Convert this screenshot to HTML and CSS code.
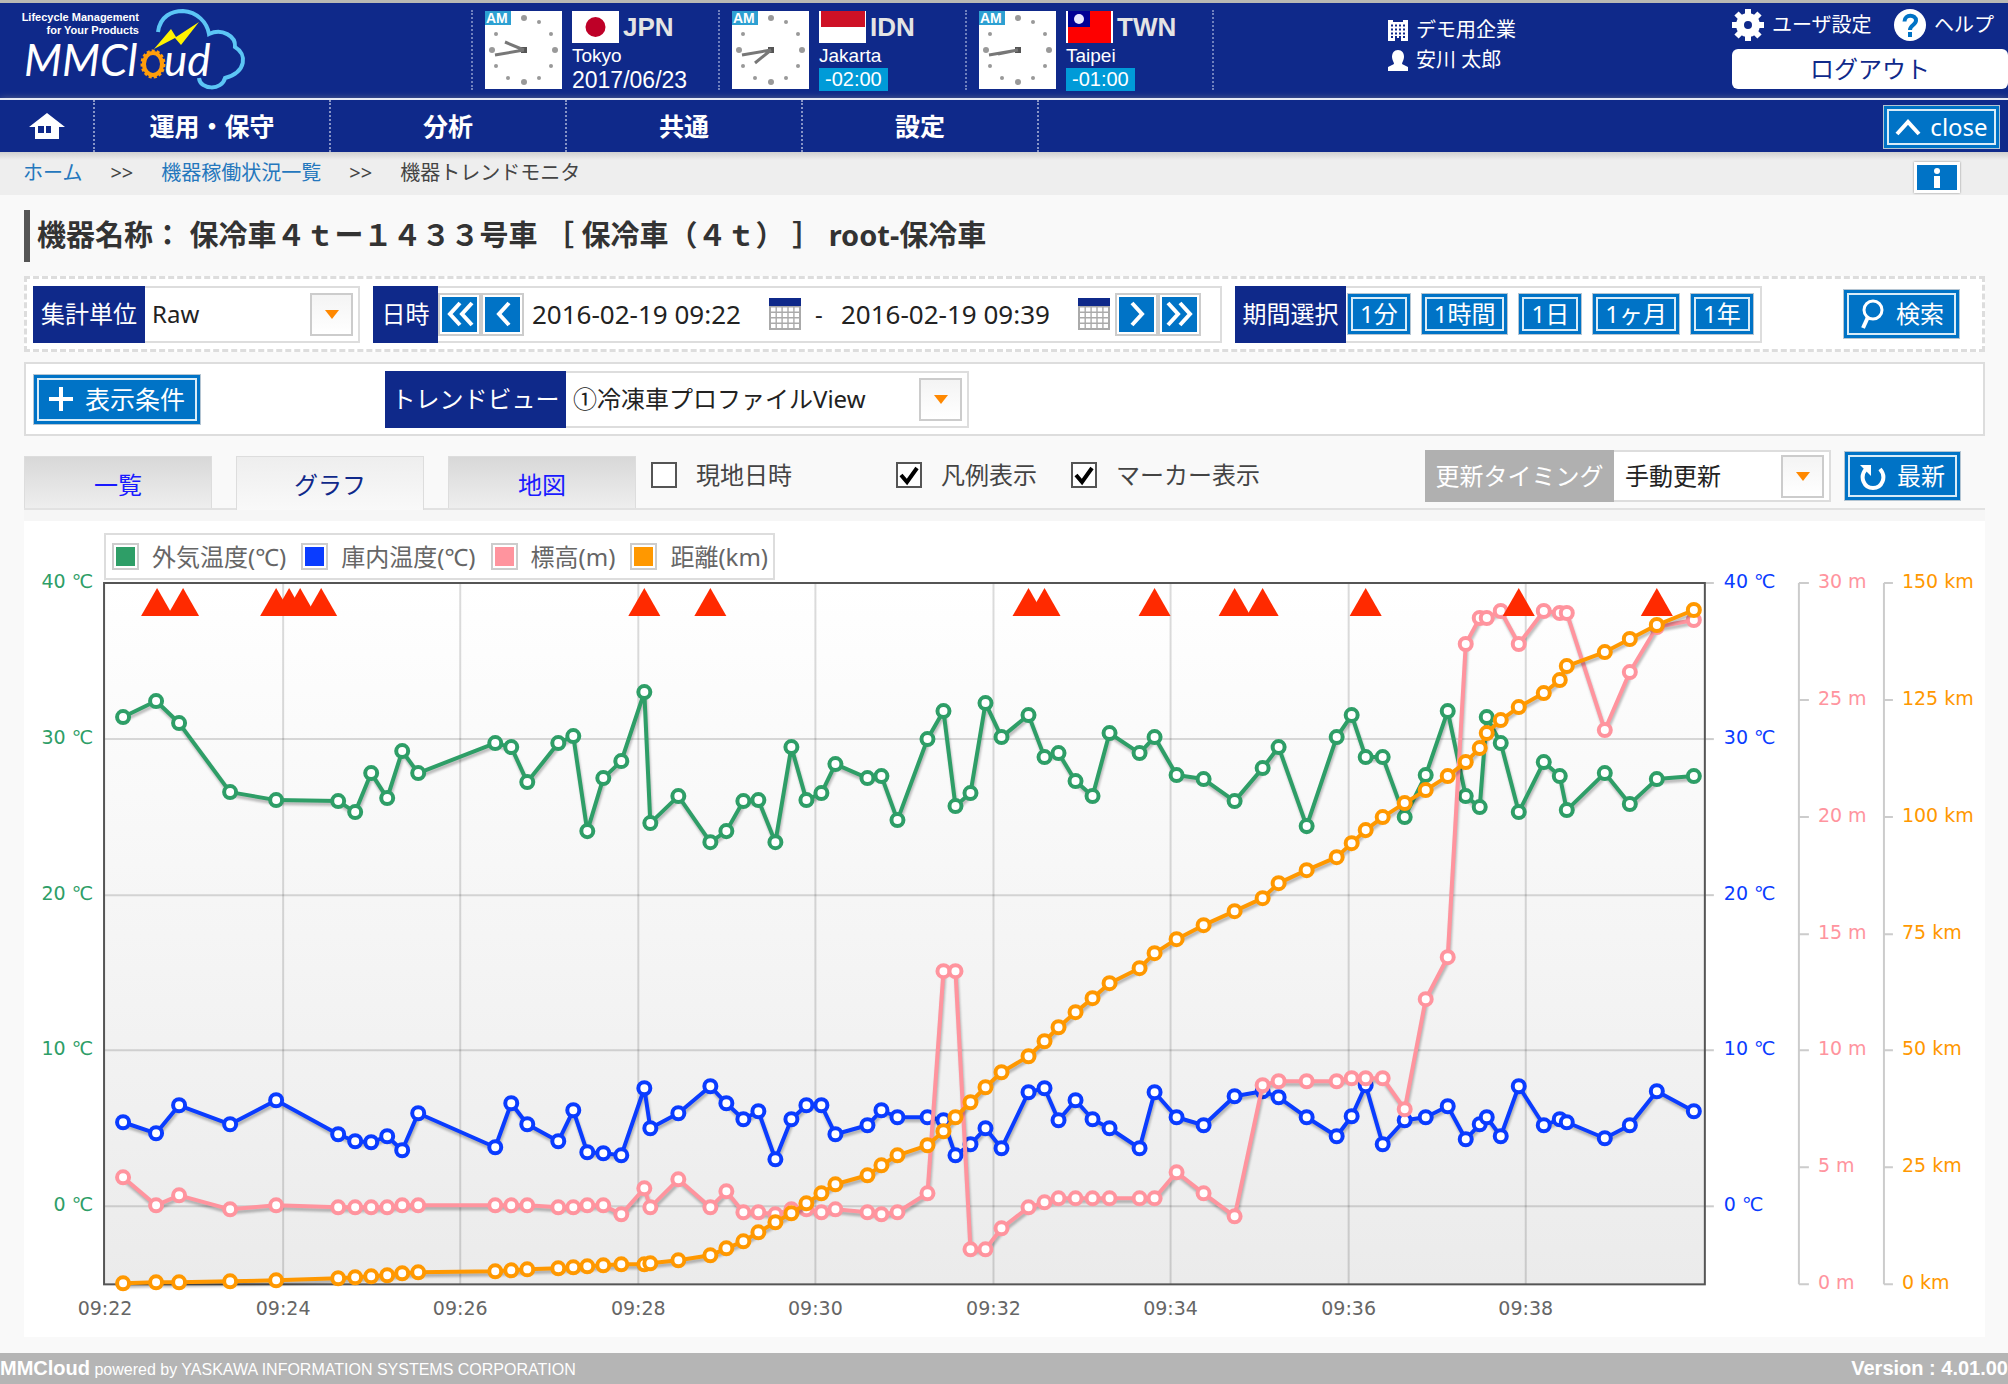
FILE: index.html
```html
<!DOCTYPE html>
<html lang="ja">
<head>
<meta charset="utf-8">
<title>MMCloud - 機器トレンドモニタ</title>
<link rel="stylesheet" href="styles.css">
</head>
<body>
<svg class="defs" width="0" height="0" aria-hidden="true">
  <symbol id="dial" viewBox="0 0 77 78">
    <g fill="#999"><circle cx="39" cy="7" r="3"/><circle cx="54" cy="11" r="2"/><circle cx="66" cy="23" r="2"/><circle cx="70" cy="39" r="3"/><circle cx="66" cy="55" r="2"/><circle cx="54" cy="67" r="2"/><circle cx="39" cy="71" r="3"/><circle cx="23" cy="67" r="2"/><circle cx="11" cy="55" r="2"/><circle cx="7" cy="39" r="3"/><circle cx="11" cy="23" r="2"/></g>
    <rect width="26" height="14" fill="#2da0d2"/>
    <rect x="36" y="36" width="6" height="6" fill="#555"/>
  </symbol>
  <symbol id="calendar" viewBox="0 0 32 32">
    <rect width="32" height="32" fill="#aaa"/><rect width="32" height="8" fill="#0f298a"/>
    <path d="M2 11.500h28M2 17h28M2 22.500h28M2 28h28" stroke="#fff" stroke-width="4" stroke-dasharray="4.500 1.400"/>
  </symbol>
</svg>

<header class="header">
  <a class="logo" href="#" aria-label="MMCloud">
    <svg width="250" height="88" viewBox="0 0 250 88">
      <g fill="#fff"><text class="tagline" x="139" y="17" text-anchor="end">Lifecycle Management</text><text class="tagline" x="139" y="30" text-anchor="end">for Your Products</text>
      <text class="wordmark" x="24" y="72">MMCl</text><text class="wordmark" x="164" y="72">ud</text></g>
      <ellipse cx="153" cy="60" rx="9" ry="11" fill="none" stroke="#ff9d0a" stroke-width="4"/>
      <ellipse cx="153" cy="60" rx="11" ry="13" fill="none" stroke="#ff9d0a" stroke-width="3" stroke-dasharray="3 2"/>
      <path d="M158 28C160 12 172 7 183 7C197 8 207 18 209 30C222 24 236 32 235 43C247 50 247 68 225 74C222 87 200 86 199 74" fill="none" stroke="#5cc5f5" stroke-width="4"/>
      <path d="M154 45L171 25L176 33L199 18L181 41L175 34Z" fill="#fff200"/>
    </svg>
  </a>
  <section class="clock">
    <svg class="face" viewBox="0 0 77 78"><use href="#dial"/><text class="am" x="1" y="12">AM</text><path d="M39 39L20 31M39 39L10 44" stroke="#777" stroke-width="3"/></svg>
    <div class="zone"><div class="country"><svg class="flag" viewBox="0 0 47 32"><rect width="47" height="32" fill="#fff"/><circle cx="23.500" cy="16" r="10" fill="#be0027"/></svg><b>JPN</b></div><span class="city">Tokyo</span><span class="date">2017/06/23</span></div>
  </section>
  <section class="clock">
    <svg class="face" viewBox="0 0 77 78"><use href="#dial"/><text class="am" x="1" y="12">AM</text><path d="M39 39L23 52M39 39L10 44" stroke="#777" stroke-width="3"/></svg>
    <div class="zone"><div class="country"><svg class="flag" viewBox="0 0 47 32"><rect width="47" height="32" fill="#fff"/><rect x="2" width="44" height="16" fill="#ce1126"/></svg><b>IDN</b></div><span class="city">Jakarta</span><span class="offset">-02:00</span></div>
  </section>
  <section class="clock last">
    <svg class="face" viewBox="0 0 77 78"><use href="#dial"/><text class="am" x="1" y="12">AM</text><path d="M39 39L19 43M39 39L10 44" stroke="#777" stroke-width="3"/></svg>
    <div class="zone"><div class="country"><svg class="flag" viewBox="0 0 47 32"><rect width="47" height="32" fill="#fff"/><rect x="2" width="43" height="32" fill="#fe0000"/><rect x="2" width="22" height="16" fill="#000095"/><circle cx="13" cy="8" r="5" fill="#e8e8ff"/></svg><b>TWN</b></div><span class="city">Taipei</span><span class="offset">-01:00</span></div>
  </section>
  <div class="account">
    <p><svg width="20" height="21" viewBox="0 0 20 21"><path d="M0 0h5v2h10V0h5v21h-7v-3H7v3H0z" fill="#fff"/><path d="M3 5.500h14M3 9.500h14M3 13.500h14M3 17h14" stroke="#0f298a" stroke-width="2" stroke-dasharray="2 2"/></svg>デモ用企業</p>
    <p><svg width="20" height="21" viewBox="0 0 20 21"><path d="M10 0c4 0 6 3 6 7 0 3-2 5-2 7l6 3v4H0v-4l6-3c0-2-2-4-2-7 0-4 2-7 6-7z" fill="#fff"/></svg>安川 太郎</p>
  </div>
  <div class="session">
    <div class="links">
      <a href="#"><svg width="32" height="32" viewBox="0 0 32 32"><circle cx="16" cy="16" r="8" fill="none" stroke="#fff" stroke-width="8"/><path d="M16 0v6M16 26v6M0 16h6M26 16h6M4.500 4.500l5 5M22.500 22.500l5 5M4.500 27.500l5-5M22.500 9.500l5-5" stroke="#fff" stroke-width="6"/></svg>ユーザ設定</a>
      <a href="#"><svg width="32" height="32" viewBox="0 0 32 32"><circle cx="16" cy="16" r="16" fill="#fff"/><path d="M10.500 12.500c0-7.500 11.500-7.500 11.500-1 0 4.500-6 4.500-6 9.500" fill="none" stroke="#0073c6" stroke-width="4"/><rect x="14" y="23" width="4" height="5" fill="#0073c6"/></svg>ヘルプ</a>
    </div>
    <button class="logout" type="button">ログアウト</button>
  </div>
</header>

<nav class="nav">
  <a class="home" href="#" aria-label="ホーム"><svg width="36" height="26" viewBox="0 0 36 26"><path d="M18 0L36 14h-6v12H6V14H0z" fill="#fff"/><path d="M9 13h6v7H9zM17 13h5v7h-5z" fill="#0f298a"/></svg></a>
  <a href="#">運用・保守</a><a href="#">分析</a><a href="#">共通</a><a href="#">設定</a>
  <button class="btn close" type="button"><svg width="26" height="18" viewBox="0 0 26 18"><path d="M2 16L13 4L24 16" fill="none" stroke="#fff" stroke-width="4"/></svg>close</button>
</nav>

<div class="crumbs">
  <a href="#">ホーム</a><span>&gt;&gt;</span><a href="#">機器稼働状況一覧</a><span>&gt;&gt;</span><span class="here">機器トレンドモニタ</span>
  <button class="info" type="button" aria-label="情報"><svg width="8" height="20" viewBox="0 0 8 20"><circle cx="4" cy="3" r="3" fill="#fff"/><rect x="1" y="8" width="6" height="12" fill="#fff"/></svg></button>
</div>

<main class="main">
  <h1 class="title">機器名称： 保冷車４ｔー１４３３号車 ［ 保冷車（４ｔ） ］ root-保冷車</h1>

  <form class="filters">
    <div class="field unit"><label class="cap" for="unit">集計単位</label><select id="unit"><option>Raw</option></select><i class="drop"></i></div>
    <div class="field period">
      <label class="cap" for="from">日時</label>
      <button class="step" type="button" aria-label="大きく戻る"><svg width="28" height="26" viewBox="0 0 28 26"><path d="M14 2L4 13L14 24M26 2L16 13L26 24" fill="none" stroke="#fff" stroke-width="4"/></svg></button>
      <button class="step" type="button" aria-label="戻る"><svg width="28" height="26" viewBox="0 0 28 26"><path d="M20 2L10 13L20 24" fill="none" stroke="#fff" stroke-width="4"/></svg></button>
      <input id="from" class="when" type="text" value="2016-02-19 09:22">
      <svg class="cal"><use href="#calendar"/></svg>
      <span class="dash">-</span>
      <input class="when" type="text" value="2016-02-19 09:39" aria-label="終了日時">
      <svg class="cal"><use href="#calendar"/></svg>
      <button class="step" type="button" aria-label="進む"><svg width="28" height="26" viewBox="0 0 28 26"><path d="M9 2L19 13L9 24" fill="none" stroke="#fff" stroke-width="4"/></svg></button>
      <button class="step" type="button" aria-label="大きく進む"><svg width="28" height="26" viewBox="0 0 28 26"><path d="M2 2L12 13L2 24M14 2L24 13L14 24" fill="none" stroke="#fff" stroke-width="4"/></svg></button>
    </div>
    <div class="field ranges"><span class="cap">期間選択</span>
      <button class="btn range" type="button">1分</button><button class="btn range" type="button">1時間</button><button class="btn range" type="button">1日</button><button class="btn range" type="button">1ヶ月</button><button class="btn range" type="button">1年</button>
    </div>
    <button class="btn action" type="button"><svg width="26" height="30" viewBox="0 0 26 30"><circle cx="14" cy="11" r="9" fill="none" stroke="#fff" stroke-width="3"/><path d="M9 18L4 29" stroke="#fff" stroke-width="4"/></svg>検索</button>
  </form>

  <div class="views">
    <button class="btn condition" type="button"><svg width="24" height="24" viewBox="0 0 24 24"><path d="M12 0v24M0 12h24" stroke="#fff" stroke-width="4"/></svg>表示条件</button>
    <div class="field view"><label class="cap" for="view">トレンドビュー</label><select id="view"><option>①冷凍車プロファイルView</option></select><i class="drop"></i></div>
  </div>

  <div class="toolbar">
    <div class="tabs"><a href="#">一覧</a><a class="active" href="#">グラフ</a><a href="#">地図</a></div>
    <div class="checks">
      <label class="local"><input type="checkbox">現地日時</label>
      <label><input type="checkbox" checked>凡例表示</label>
      <label><input type="checkbox" checked>マーカー表示</label>
    </div>
    <div class="field timing"><label class="cap" for="timing">更新タイミング</label><select id="timing"><option>手動更新</option></select><i class="drop"></i></div>
    <button class="btn action" type="button"><svg width="26" height="30" viewBox="0 0 26 30"><path d="M6 8C-1 16 4 27 13 27S27 16 20 8" fill="none" stroke="#fff" stroke-width="4"/><path d="M0 4h11v11z" fill="#fff"/></svg>最新</button>
  </div>

  <section class="panel">
    <ul class="legend">
      <li><i class="sw green"></i>外気温度(℃)</li><li><i class="sw blue"></i>庫内温度(℃)</li><li><i class="sw pink"></i>標高(m)</li><li><i class="sw orange"></i>距離(km)</li>
    </ul>
    <svg id="chart" class="chart" viewBox="24 581 1960 757" role="img" aria-label="トレンドグラフ"></svg>
  </section>
</main>

<footer class="footer"><span><b>MMCloud</b> powered by YASKAWA INFORMATION SYSTEMS CORPORATION</span><b>Version : 4.01.00</b></footer>
<script src="chart.js"></script>
</body>
</html>
```
FILE: styles.css
```css
* { box-sizing: border-box; }
body {
  margin: 0;
  min-height: 100vh;
  display: flex;
  flex-direction: column;
  background: #f9f9f9;
  color: #444;
  font: 24px/32px "Noto Sans", "Noto Sans CJK JP", sans-serif;
}
a { text-decoration: none; color: inherit; }
button, input, select { font: inherit; color: inherit; margin: 0; }
button { cursor: pointer; padding: 0; }
p, ul, h1 { margin: 0; padding: 0; }
.defs { position: absolute; }

.header {
  display: flex;
  height: 98px;
  padding-top: 5px;
  border-top: 3px solid #b9b9b4;
  background: #0f298a;
  color: #fff;
  font-size: 20px;
}
.logo { width: 471px; }
.logo svg { display: block; margin-top: -4px; }
.tagline { font: bold 11px "Liberation Sans", sans-serif; }
.wordmark { font: italic 44px Lato, sans-serif; }
.clock {
  display: flex;
  gap: 10px;
  width: 247px;
  height: 80px;
  margin-top: 2px;
  padding: 1px 0 0 12px;
  border-left: 2px dotted #6f80bd;
  font-family: "Liberation Sans", Arial, sans-serif;
}
.clock.last { width: 249px; border-right: 2px dotted #6f80bd; }
.face { width: 77px; height: 78px; background: #fff; }
.am { font: bold 14px "Liberation Sans", sans-serif; fill: #fff; }
.zone { display: flex; flex-direction: column; align-items: flex-start; }
.country { display: flex; align-items: center; gap: 4px; height: 32px; font-size: 26px; color: #e4e4e4; }
.flag { width: 47px; height: 32px; }
.city { font-size: 19px; line-height: 25px; }
.date { font-size: 23px; line-height: 24px; }
.offset { padding: 0 6px; background: #009bd8; line-height: 23px; }
.account { margin: 7px auto 0 174px; }
.account p { display: flex; align-items: center; gap: 8px; height: 30px; }
.session { width: 276px; }
.links { display: flex; justify-content: space-between; padding-right: 14px; height: 41px; }
.links a { display: flex; align-items: center; gap: 8px; height: 34px; }
.logout {
  display: block;
  width: 100%;
  height: 40px;
  border: 0;
  border-radius: 6px;
  background: #fff;
  color: #0f298a;
  font-size: 24px;
  line-height: 40px;
}

.nav {
  display: flex;
  height: 54px;
  border-top: 2px solid #e6eaf5;
  background: #0f298a;
  color: #fff;
  font-size: 25px;
  font-weight: bold;
  box-shadow: 0 2px 8px #888;
}
.nav a {
  display: flex;
  align-items: center;
  justify-content: center;
  width: 236px;
  border-right: 2px dotted #8794c6;
}
.nav .home { width: 95px; }

.btn {
  display: flex;
  align-items: center;
  justify-content: center;
  border: 1px solid #b5c5d2;
  background: #0073c6;
  color: #fff;
  box-shadow: inset 0 0 0 3px #0073c6, inset 0 0 0 5px #d9ecf8;
}
.close { gap: 9px; width: 117px; height: 44px; margin: 5px 8px 0 auto; font-size: 24px; font-weight: normal; }

.crumbs {
  display: flex;
  align-items: flex-start;
  gap: 28px;
  height: 43px;
  padding: 5px 48px 0 23px;
  background: linear-gradient(#d0d0d0, #eee 8px);
  font-size: 20px;
}
.crumbs a { color: #2477bd; }
.info {
  display: flex;
  align-items: center;
  justify-content: center;
  width: 46px;
  height: 31px;
  margin: 5px 0 0 auto;
  border: 3px solid #fff;
  background: #0073c6;
  box-shadow: 0 0 2px #888;
}

.main { flex: 1; padding: 15px 23px 15px 24px; }
.title {
  height: 52px;
  padding-left: 7px;
  border-left: 6px solid #555;
  color: #333;
  font-size: 29px;
  line-height: 50px;
  white-space: nowrap;
}
.filters, .views { display: flex; align-items: center; background: #fff; }
.filters { height: 76px; margin-top: 14px; padding: 0 22px 0 6px; border: 3px dashed #ddd; }
.field { display: flex; align-items: center; height: 57px; border: 2px solid #ddd; background: #fff; color: #222; }
.cap {
  flex-shrink: 0;
  align-self: stretch;
  display: flex;
  align-items: center;
  justify-content: center;
  margin: -2px 0 -2px -2px;
  background: #0f298a;
  color: #fff;
  white-space: nowrap;
}
.field select { flex: 1; min-width: 0; height: 50px; padding: 0 7px; border: 0; background: transparent; appearance: none; }
.drop {
  display: flex;
  align-items: center;
  justify-content: center;
  width: 43px;
  height: 43px;
  margin-right: 5px;
  border: 2px solid #ccc;
  background: linear-gradient(#f4f4f4, #fff);
}
.drop::after { content: ""; border: 7px solid transparent; border-top: 9px solid #f80; border-bottom: 0; }
.unit { width: 327px; }
.unit .cap { width: 112px; }
.period { width: 849px; margin-left: 13px; }
.period .cap { width: 65px; }
.step {
  display: flex;
  align-items: center;
  justify-content: center;
  width: 43px;
  height: 43px;
  border: 2px solid #ccc;
  background: #0073c6;
  box-shadow: inset 0 0 0 2px #fff;
}
.when { width: 245px; padding: 0 0 0 8px; border: 0; background: transparent; font-size: 26px; }
.cal { width: 32px; height: 32px; margin-right: 5px; }
.dash { width: 27px; padding-left: 9px; }
.ranges { width: 527px; margin-left: 13px; gap: 10px; }
.ranges .cap { width: 111px; margin-right: -9px; }
.range { height: 42px; padding: 0 12px; line-height: 36px; white-space: nowrap; }
.action { gap: 11px; width: 117px; height: 50px; margin-left: auto; }
.views { height: 74px; margin-top: 10px; padding: 0 7px; border: 2px solid #ddd; }
.condition { gap: 12px; width: 168px; height: 51px; font-size: 25px; }
.view { width: 584px; margin-left: 184px; }
.view .cap { width: 181px; }

.toolbar { display: flex; height: 74px; padding: 14px 24px 0 0; border-bottom: 2px solid #e2e2e2; }
.tabs { display: flex; gap: 24px; margin-top: 6px; }
.tabs a {
  width: 188px;
  height: 52px;
  border: 1px solid #ddd;
  border-bottom: 0;
  background: linear-gradient(#d8d8d8, #eee);
  color: #1a1aff;
  text-align: center;
  line-height: 56px;
}
.tabs .active { height: 54px; background: linear-gradient(#eee, #f9f9f9); color: #0f298a; }
.checks { display: flex; gap: 34px; height: 50px; margin-left: 15px; }
.checks label { display: flex; align-items: center; gap: 19px; white-space: nowrap; }
.checks .local { margin-right: 70px; }
.checks input { width: 26px; height: 26px; border: 2px solid #555; background: #fff; appearance: none; }
.checks input:checked {
  background: #fff url("data:image/svg+xml,%3Csvg xmlns='http://www.w3.org/2000/svg' viewBox='0 0 22 22'%3E%3Cpath d='M3 11l6 7L19 4' fill='none' stroke='%23000' stroke-width='4'/%3E%3C/svg%3E");
}
.timing { width: 406px; height: 52px; margin-left: auto; }
.timing .cap { width: 189px; background: #b0b0b0; }
.timing select { height: 46px; padding-left: 11px; }
.toolbar .action { margin: 1px 0 0 13px; }

.panel {
  padding-top: 12px;
  border-top: 11px solid #f6f6f6;
  background: #fff;
}
.legend {
  display: flex;
  gap: 15px;
  width: max-content;
  height: 47px;
  margin-left: 80px;
  padding: 0 5px 0 6px;
  border: 2px solid #ddd;
  list-style: none;
  color: #666;
}
.legend li { display: flex; align-items: center; gap: 13px; }
.sw { width: 27px; height: 27px; border: 2px solid #ccc; box-shadow: inset 0 0 0 2px #fff; }
.green { background: #2e9e67; }
.blue { background: #0a3cff; }
.pink { background: #ff949e; }
.orange { background: #ff9800; }
.chart { display: block; width: 100%; overflow: visible; font: 19px "DejaVu Sans", Verdana, sans-serif; }
.grid { stroke: #000; stroke-opacity: .14; stroke-width: 2; }
.axis { fill: none; stroke: #ccc; stroke-width: 2; }
.line { fill: none; stroke-width: 4; stroke-linejoin: round; filter: drop-shadow(1px 3px 1px rgba(0, 0, 0, .25)); }
.dot { fill: #fff; stroke-width: 4; }

.footer {
  display: flex;
  justify-content: space-between;
  align-items: center;
  height: 31px;
  background: #b5b5b5;
  color: #fff;
  font: 16px/31px "Liberation Sans", Arial, sans-serif;
  white-space: nowrap;
}
.footer b { font-size: 20px; }
```
FILE: chart.js
```js
// Horizontal position of every sample, shared by all four series
const xs = [123,156,179,230,276,338,355,371,387,402,418,495,511,527,558,573,587,603,621,644,650,678,
  710,726,743,758,775,791,806,821,835,867,881,897,927,943,955,970,985,1001,1028,1044,1058,1075,1092,1109,1139,1154,1176,1203,1234,1262,1278,1306,1336,
  1351,1365,1382,1404,1425,1447,1465,1479,1486,1500,1518,1543,1559,1566,1604,1629,1656,1693];
const outside = [31.4,32.4,31,26.6,26.1,26,25.3,27.8,26.2,29.2,27.8,29.7,29.5,27.2,29.7,30.2,24.1,27.5,28.6,33,24.6,26.3,
  23.4,24.1,26,26.1,23.4,29.5,26.1,26.5,28.4,27.5,27.6,24.8,30,31.8,25.7,26.5,32.3,30.1,31.5,28.8,29.1,27.3,26.3,30.4,29.1,30.1,27.7,27.4,26,28.1,29.5,24.4,30.1,
  31.5,28.8,28.8,25,27.7,31.8,26.3,25.6,31.4,29.7,25.3,28.5,27.6,25.4,27.8,25.8,27.4,27.6];
const inside = [5.4,4.7,6.5,5.3,6.8,4.6,4.2,4.1,4.5,3.6,6,3.8,6.6,5.3,4.2,6.2,3.5,3.4,3.3,7.6,5,6,
  7.7,6.6,5.6,6.1,3,5.6,6.5,6.5,4.6,5.2,6.2,5.7,5.7,5.5,3.3,4,5,3.7,7.3,7.6,5.5,6.8,5.6,5,3.7,7.3,5.7,5.2,7.1,7.4,7,5.7,4.5,
  5.8,7.8,4,5.5,5.7,6.4,4.3,5.3,5.7,4.5,7.7,5.2,5.6,5.4,4.4,5.2,7.4,6.1];
const altitude = [4.6,3.4,3.8,3.2,3.4,3.3,3.3,3.3,3.3,3.4,3.4,3.4,3.4,3.4,3.3,3.3,3.4,3.4,3,4.1,3.3,4.5,
  3.3,4,3.1,3.1,3,3.2,3.2,3.1,3.2,3.1,3,3.1,3.9,13.4,13.4,1.5,1.5,2.4,3.3,3.5,3.7,3.7,3.7,3.7,3.7,3.7,4.8,3.9,2.9,8.5,8.7,8.7,8.7,
  8.8,8.8,8.8,7.5,12.2,14,27.4,28.5,28.5,28.8,27.4,28.8,28.7,28.7,23.7,26.2,28.1,28.4];
const distance = [.3,.4,.5,.7,.9,1.2,1.5,1.8,2,2.3,2.5,2.7,2.9,3.2,3.5,3.7,3.9,4,4.2,4.3,4.5,5.1,
  6.2,7.6,9.3,11.2,13.2,15.2,17.3,19.4,21.4,23.4,25.5,27.6,29.8,32.8,35.8,38.9,42.2,45.4,48.7,51.9,55,58.2,61.3,64.4,67.6,70.8,73.9,76.9,79.8,82.7,85.7,88.5,91.4,
  94.3,97.2,100,102.9,105.8,108.8,111.8,114.7,117.8,120.7,123.5,126.5,129.3,132.2,135.3,138.1,141.1,144.2];
const alarms = [157,183,276,289,300,321,644,710,1028,1044,1154,1234,1262,1365,1518,1656];

const left = 104, right = 1704, top_ = 584, bottom = 1285;
const scale = (min, max) => v => Math.round(bottom - (v - min) / (max - min) * (bottom - top_));
const temp = scale(-5, 40), metres = scale(0, 30), km = scale(0, 150);
const GREEN = '#2e9e67', BLUE = '#0a3cff', PINK = '#ff949e', ORANGE = '#ff9800';

function series(values, y, color) {
  const pts = xs.map((x, i) => [x, y(values[i])]);
  return `<g stroke="${color}"><polyline class="line" points="${pts.join(' ')}"/>` +
    pts.map(p => `<circle class="dot" cx="${p[0]}" cy="${p[1]}" r="6"/>`).join('') + '</g>';
}
const label = (x, y, text, color, anchor) =>
  `<text x="${x}" y="${y + 6}" fill="${color}" text-anchor="${anchor || 'start'}">${text}</text>`;

let out = `<defs><linearGradient id="bg" x2="0" y2="1"><stop stop-color="#fff"/><stop offset="1" stop-color="#ebebeb"/></linearGradient></defs>
<rect x="${left}" y="${top_}" width="${right - left}" height="${bottom - top_}" fill="url(#bg)"/>`;
for (let i = 0; i < 9; i++) {
  const x = Math.round(105 + i * 177.5);
  if (i) out += `<path class="grid" d="M${x} ${top_}V${bottom}"/>`;
  out += label(x, 1310, '09:' + (22 + i * 2), '#666', 'middle');
}
for (let t = 0; t <= 40; t += 10) {
  const y = temp(t);
  if (t < 40) out += `<path class="grid" d="M${left} ${y}H${right}"/>`;
  out += `<path class="axis" d="M${right} ${y}h9"/>`;
  out += label(93, y - 1, t + ' ℃', GREEN, 'end') + label(1723, y - 1, t + ' ℃', BLUE);
}
out += `<path class="axis" d="M1798 ${top_}V${bottom}M1883 ${top_}V${bottom}"/>`;
for (let i = 0; i <= 6; i++) {
  const y = metres(i * 5);
  out += `<path class="axis" d="M1798 ${y}h10M1883 ${y}h9"/>`;
  out += label(1817, y - 1, i * 5 + ' m', PINK) + label(1901, y - 1, i * 25 + ' km', ORANGE);
}
out += `<rect x="${left}" y="${top_}" width="${right - left}" height="${bottom - top_}" fill="none" stroke="#555" stroke-width="2"/>`;
out += series(outside, temp, GREEN) + series(inside, temp, BLUE) + series(altitude, metres, PINK);
out += alarms.map(x => `<path fill="#ff2a00" d="M${x} 589l16 28h-32z"/>`).join('');
out += series(distance, km, ORANGE);
document.getElementById('chart').innerHTML = out;
```
